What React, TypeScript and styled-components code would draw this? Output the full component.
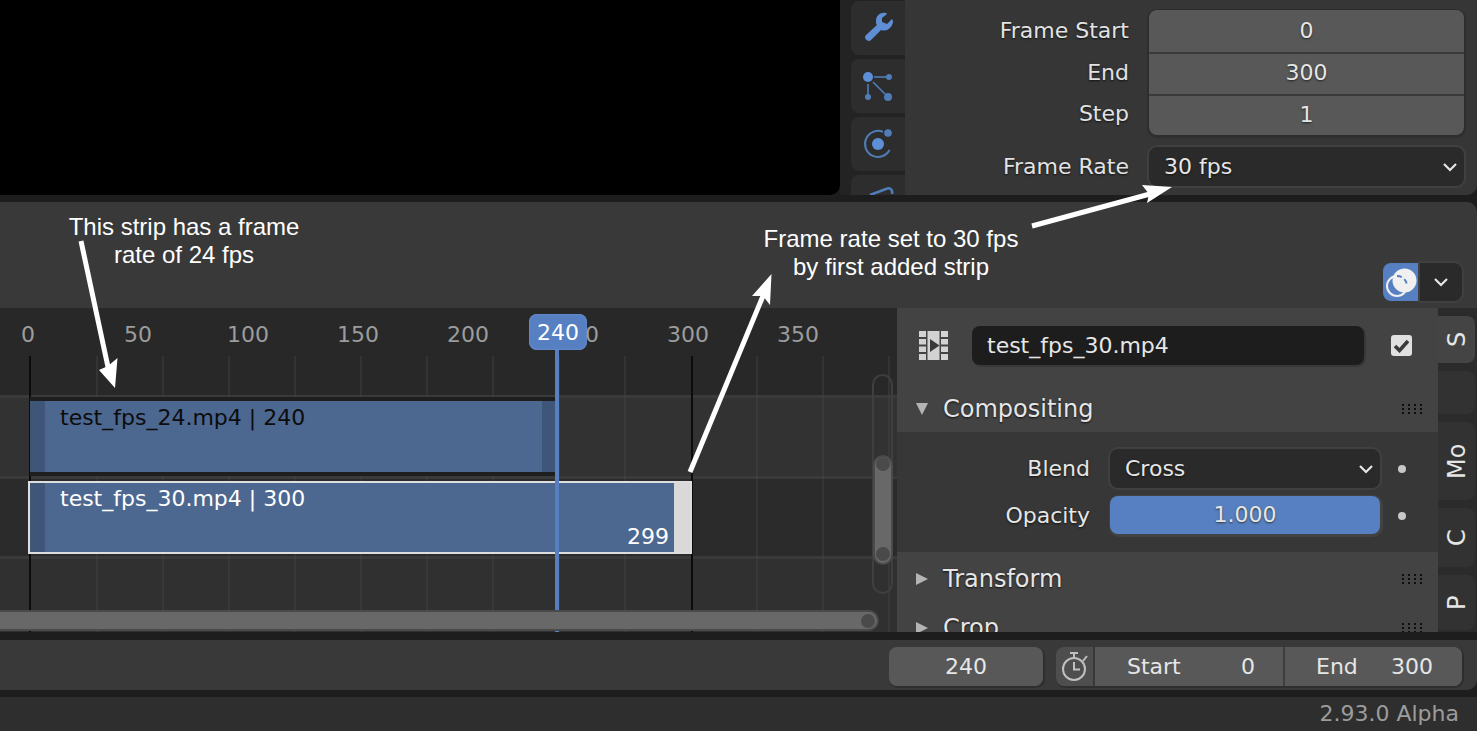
import React from 'react';
import styled, { createGlobalStyle } from 'styled-components';

const GlobalStyle = createGlobalStyle`
  html, body {
    margin: 0;
    padding: 0;
    background: #1d1d1d;
  }
  * { box-sizing: border-box; }
`;

const colors = {
  text: '#e6e6e6',
  blue: '#5680c2',
  field: '#585858',
  dark: '#2a2a2a',
  strip: '#4d6890',
  stripEnd: '#3f5678',
};

const Page = styled.div`
  position: relative;
  width: 1477px;
  height: 731px;
  overflow: hidden;
  display: flex;
  flex-direction: column;
  background: #1d1d1d;
  font-family: 'DejaVu Sans', sans-serif;
  font-size: 22px;
  color: ${colors.text};
`;

/* top area */
const TopRow = styled.div`
  height: 195px;
  display: flex;
  flex-shrink: 0;
`;
const Viewport = styled.div`
  width: 840px;
  background: #000;
  border-bottom-right-radius: 10px;
`;
const ToolTabs = styled.div`
  width: 65px;
  padding-left: 11px;
  background: #232323;
  display: flex;
  flex-direction: column;
  gap: 4px;
  overflow: hidden;
`;
const ToolTab = styled.div<{ $first?: boolean }>`
  width: 54px;
  height: 54px;
  flex-shrink: 0;
  margin-top: ${p => (p.$first ? '1px' : '0')};
  background: #2d2d2d;
  border-radius: 8px 0 0 8px;
  display: flex;
  align-items: center;
  justify-content: center;
`;
const OutputPanel = styled.div`
  flex: 1;
  background: #363636;
  border-bottom-right-radius: 10px;
  padding: 10px 13px 0 0;
  display: grid;
  grid-template-columns: 224px 1fr;
  grid-auto-rows: min-content;
  column-gap: 20px;
`;
const Label = styled.div`
  text-align: right;
  text-shadow: 0 1px 2px #111;
  color: #e2e2e2;
  line-height: 42px;
  height: 41px;
`;
const NumGroup = styled.div`
  grid-column: 2;
  grid-row: 1 / span 3;
  height: 125px;
  border-radius: 8px;
  background: ${colors.field};
  box-shadow: 0 1px 0 2px #2e2e2e;
  display: flex;
  flex-direction: column;
`;
const NumCell = styled.div<{ $first?: boolean }>`
  flex: 1;
  text-align: center;
  line-height: ${p => (p.$first ? 42 : 38)}px;
  text-shadow: 0 1px 2px #222;
  border-top: ${p => (p.$first ? 'none' : '2px solid #3a3a3a')};
`;
const Select = styled.div`
  height: 39px;
  border-radius: 8px;
  background: ${colors.dark};
  box-shadow: 0 0 0 2px #404040;
  display: flex;
  align-items: center;
  justify-content: space-between;
  padding: 0 6px 0 15px;
  text-shadow: 0 1px 2px #111;
`;
const RateLabel = styled(Label)`
  margin-top: 11px;
`;
const RateSelect = styled(Select)`
  margin-top: 12px;
`;

/* sequencer editor */
const Editor = styled.div`
  height: 430px;
  margin-top: 7px;
  flex-shrink: 0;
  display: flex;
  flex-direction: column;
  background: #393939;
  border-radius: 0 10px 0 0;
  overflow: hidden;
`;
const EditorHeader = styled.div`
  height: 106px;
  flex-shrink: 0;
  display: flex;
  justify-content: flex-end;
  align-items: flex-end;
  padding: 0 15px 7px 0;
`;
const OverlayToggle = styled.div`
  width: 37px;
  height: 38px;
  background: ${colors.blue};
  border-radius: 8px 0 0 8px;
  display: flex;
  align-items: center;
  justify-content: center;
`;
const OverlayMenu = styled.div`
  width: 42px;
  height: 38px;
  background: ${colors.dark};
  border-radius: 0 8px 8px 0;
  box-shadow: 0 0 0 2px #404040;
  display: flex;
  align-items: center;
  justify-content: center;
`;
const EditorBody = styled.div`
  flex: 1;
  display: flex;
  min-height: 0;
`;
const Canvas = styled.div`
  position: relative;
  width: 897px;
  height: 324px;
  overflow: hidden;
  background: #282828;
`;
const Channels = styled.div`
  margin-top: 87px;
  display: flex;
  flex-direction: column;
`;
const Channel = styled.div<{ $h: number; $bg: string }>`
  height: ${p => p.$h}px;
  background: ${p => p.$bg};
  border-top: 3px solid #3a3a3a;
`;
const GridLine = styled.div<{ $x: number }>`
  position: absolute;
  top: 48px;
  bottom: 0;
  left: ${p => p.$x}px;
  width: 2px;
  background: rgba(70, 70, 70, 0.4);
`;
const Bound = styled.div<{ $x: number }>`
  position: absolute;
  top: 48px;
  bottom: 0;
  left: ${p => p.$x}px;
  width: 2px;
  background: #0c0c0c;
`;
const Tick = styled.div<{ $x: number }>`
  position: absolute;
  top: 14px;
  left: ${p => p.$x}px;
  transform: translateX(-50%);
  color: #9c9c9c;
  line-height: 26px;
`;
const Strip = styled.div<{ $top: number; $left: number; $w: number; $h: number }>`
  position: absolute;
  left: ${p => p.$left}px;
  top: ${p => p.$top}px;
  width: ${p => p.$w}px;
  height: ${p => p.$h}px;
  background: ${colors.strip};
`;
const PlainStrip = styled(Strip)`
  box-shadow: 0 -4px 0 #1e1e1e, 0 4px 0 #1e1e1e;
  color: #0c0c0c;
`;
const ActiveStrip = styled(Strip)`
  border: 2px solid #dedede;
  color: #fff;
`;
const Handle = styled.div<{ $side: 'left' | 'right'; $w: number; $color: string }>`
  position: absolute;
  top: 0;
  bottom: 0;
  ${p => p.$side}: 0;
  width: ${p => p.$w}px;
  background: ${p => p.$color};
`;
const StripName = styled.div<{ $active?: boolean }>`
  position: absolute;
  left: 30px;
  top: ${p => (p.$active ? 3 : 4)}px;
  line-height: 26px;
  white-space: nowrap;
`;
const EndFrame = styled.div`
  position: absolute;
  right: 21px;
  bottom: 2px;
  line-height: 26px;
`;
const Playhead = styled.div`
  position: absolute;
  left: 555px;
  top: 42px;
  bottom: 0;
  width: 4px;
  background: ${colors.blue};
`;
const FrameBadge = styled.div`
  position: absolute;
  left: 529px;
  top: 6px;
  width: 58px;
  height: 36px;
  border-radius: 8px;
  background: ${colors.blue};
  box-shadow: inset 0 0 0 1px #6088c8;
  color: #fff;
  text-align: center;
  line-height: 38px;
`;
const VScroll = styled.div`
  position: absolute;
  left: 872px;
  top: 66px;
  width: 21px;
  height: 220px;
  border: 2px solid #3f3f3f;
  border-radius: 11px;
`;
const VThumb = styled.div`
  position: absolute;
  left: 1px;
  top: 81px;
  width: 16px;
  height: 106px;
  border-radius: 8px;
  background: #686868;
  box-shadow: 0 0 0 2px #4a4a4a;
  display: flex;
  flex-direction: column;
  justify-content: space-between;
  align-items: center;
  padding-bottom: 2px;
`;
const Knob = styled.div`
  width: 14px;
  height: 14px;
  border-radius: 50%;
  background: #4a4a4a;
`;
const HScroll = styled.div`
  position: absolute;
  left: -10px;
  top: 304px;
  width: 887px;
  height: 17px;
  border-radius: 9px;
  background: #686868;
  box-shadow: 0 0 0 2px #4a4a4a;
  display: flex;
  justify-content: flex-end;
  align-items: center;
  padding-right: 2px;
`;

/* sidebar */
const Sidebar = styled.div`
  flex: 1;
  display: flex;
  height: 324px;
`;
const SidePanel = styled.div`
  width: 541px;
  height: 324px;
  overflow: hidden;
  background: #434343;
  display: flex;
  flex-direction: column;
`;
const NameRow = styled.div`
  height: 77px;
  flex-shrink: 0;
  padding: 18px 25px 0 22px;
  display: flex;
  align-items: flex-start;
`;
const FilmWrap = styled.div`
  width: 29px;
  height: 29px;
  margin-top: 5px;
`;
const NameField = styled.div`
  width: 392px;
  height: 39px;
  margin-left: 24px;
  border-radius: 8px;
  background: #1d1d1d;
  box-shadow: 1px 1px 0 1px #383838;
  padding-left: 15px;
  line-height: 39px;
`;
const Checkbox = styled.div`
  width: 21px;
  height: 21px;
  margin: 9px 0 0 27px;
  border-radius: 3px;
  background: #e0e0e0;
  display: flex;
  align-items: center;
  justify-content: center;
`;
const PanelHead = styled.div<{ $h: number }>`
  height: ${p => p.$h}px;
  flex-shrink: 0;
  display: flex;
  align-items: center;
  padding: 0 14px 0 19px;
  gap: 15px;
  font-size: 24px;
  text-shadow: 0 1px 2px #111;
`;
const Arrow = styled.div<{ $open?: boolean }>`
  width: 0;
  height: 0;
  ${p =>
    p.$open
      ? `border-left: 6px solid transparent;
         border-right: 6px solid transparent;
         border-top: 12px solid #b4b4b4;`
      : `border-top: 6px solid transparent;
         border-bottom: 6px solid transparent;
         border-left: 12px solid #b4b4b4;`}
`;
const Grip = styled.div`
  margin-left: auto;
  width: 24px;
  height: 12px;
  background-image: radial-gradient(circle, #0e0e0e 1px, transparent 1.4px);
  background-size: 6px 4px;
`;
const PanelBody = styled.div`
  height: 120px;
  flex-shrink: 0;
  background: #373737;
  padding-top: 17px;
  display: grid;
  grid-template-columns: 193px 270px 1fr;
  grid-auto-rows: 47px;
  column-gap: 20px;
  align-items: start;
`;
const BodyLabel = styled.div`
  text-align: right;
  line-height: 40px;
  text-shadow: 0 1px 2px #111;
`;
const Slider = styled.div`
  height: 38px;
  border-radius: 8px;
  background: ${colors.blue};
  box-shadow: 1px 1px 0 2px #424242;
  text-align: center;
  line-height: 38px;
  text-shadow: 0 1px 2px #333;
`;
const Dot = styled.div`
  width: 8px;
  height: 8px;
  margin: 16px 0 0 -2px;
  border-radius: 50%;
  background: #c8c8c8;
`;
const SideTabs = styled.div`
  flex: 1;
  height: 324px;
  overflow: hidden;
  background: #2b2b2b;
  display: flex;
  flex-direction: column;
  gap: 8px;
  padding: 8px 2px 0 0;
`;
const SideTab = styled.div<{ $h: number; $active?: boolean }>`
  height: ${p => p.$h}px;
  flex-shrink: 0;
  background: ${p => (p.$active ? '#444444' : '#323232')};
  writing-mode: vertical-rl;
  transform: rotate(180deg);
  border-radius: 8px 0 0 8px;
  font-size: 24px;
  display: flex;
  align-items: center;
  justify-content: center;
`;

/* timeline bar */
const TimelineBar = styled.div`
  height: 50px;
  margin-top: 8px;
  flex-shrink: 0;
  background: #393939;
  border-radius: 0 0 10px 0;
  display: flex;
  align-items: flex-start;
  justify-content: flex-end;
  padding: 7px 15px 0 0;
`;
const FrameField = styled.div`
  width: 154px;
  height: 39px;
  border-radius: 8px;
  background: ${colors.field};
  box-shadow: 1px 1px 0 1px #2e2e2e;
  text-align: center;
  line-height: 39px;
  margin-right: 13px;
`;
const RangeGroup = styled.div`
  display: flex;
  height: 39px;
  box-shadow: 1px 1px 0 1px #2e2e2e;
  border-radius: 8px;
  overflow: hidden;
`;
const ClockButton = styled.div`
  width: 39px;
  background: #4e4e4e;
  display: flex;
  align-items: center;
  justify-content: center;
  border-right: 2px solid #383838;
`;
const RangeCell = styled.div<{ $w: number; $pl: number; $pr: number; $split?: boolean }>`
  width: ${p => p.$w}px;
  background: ${colors.field};
  display: flex;
  justify-content: space-between;
  padding: 0 ${p => p.$pr}px 0 ${p => p.$pl}px;
  line-height: 39px;
  border-left: ${p => (p.$split ? '2px solid #3e3e3e' : 'none')};
`;
const StatusBar = styled.div`
  height: 34px;
  margin-top: 7px;
  flex-shrink: 0;
  background: #2e2e2e;
  text-align: right;
  padding-right: 18px;
  line-height: 34px;
  color: #9c9c9c;
`;

/* annotations on top of the screenshot */
const Note = styled.div<{ $x: number; $y: number; $w: number }>`
  position: absolute;
  left: ${p => p.$x}px;
  top: ${p => p.$y}px;
  width: ${p => p.$w}px;
  font-family: 'Liberation Sans', Arial, sans-serif;
  font-size: 24px;
  line-height: 28px;
  color: #fff;
  text-align: center;
`;
const ArrowLayer = styled.svg`
  position: absolute;
  left: 0;
  top: 0;
  pointer-events: none;
`;

const Chevron = () => (
  <svg width="16" height="10" viewBox="0 0 16 10">
    <path d="M2 2l6 6 6-6" fill="none" stroke="#e6e6e6" strokeWidth="2.2" />
  </svg>
);

const Wrench = () => (
  <svg width="32" height="32" viewBox="0 0 32 32">
    <path
      d="M24 1C19 0 14 3 14 9c0 2 0 3 1 4L4 23c-3 3 2 8 5 5l10-10c6 2 11-2 12-8 0-2-1-3-1-3l-5 5-5-2v-4l5-4z"
      fill="#5e8fd6"
    />
  </svg>
);

const Nodes = () => (
  <svg width="32" height="32" viewBox="0 0 32 32" fill="#4f7db8" stroke="#4f7db8">
    <line x1="12" y1="7" x2="24" y2="7" strokeWidth="1.600" />
    <line x1="6" y1="14" x2="6" y2="25" strokeWidth="1.600" />
    <line x1="11" y1="12" x2="23" y2="24" strokeWidth="1.600" />
    <circle cx="6" cy="7" r="5" fill="#5e8fd6" stroke="none" />
    <circle cx="27" cy="7" r="3" stroke="none" />
    <circle cx="6" cy="27" r="3" stroke="none" />
    <circle cx="26" cy="27" r="4" stroke="none" />
  </svg>
);

const Orbit = () => (
  <svg width="32" height="32" viewBox="0 0 32 32">
    <path d="M21 3.900A13 13 0 1 0 27.500 22" fill="none" stroke="#4f7db8" strokeWidth="2" />
    <circle cx="16" cy="16" r="6" fill="#5e8fd6" />
    <circle cx="26" cy="5" r="3.800" fill="#4f7db8" />
  </svg>
);

const Partial = () => (
  <svg width="32" height="32" viewBox="0 0 32 32">
    <path d="M8 9L24 3c4-2 7 1 6 5" fill="none" stroke="#4f7db8" strokeWidth="2.500" />
  </svg>
);

const Film = () => (
  <svg width="29" height="29" viewBox="0 0 29 29">
    <g fill="#d2d2d2">
      <rect x="0" y="0" width="7" height="6" />
      <rect x="0" y="8" width="7" height="5.500" />
      <rect x="0" y="15.500" width="7" height="5.500" />
      <rect x="0" y="23" width="7" height="6" />
      <rect x="22" y="0" width="7" height="6" />
      <rect x="22" y="8" width="7" height="5.500" />
      <rect x="22" y="15.500" width="7" height="5.500" />
      <rect x="22" y="23" width="7" height="6" />
      <rect x="8.500" y="0" width="12" height="29" />
    </g>
    <path d="M11 8l9.500 6.500L11 21z" fill="#3a3a3a" />
  </svg>
);

const Check = () => (
  <svg width="17" height="15" viewBox="0 0 17 15">
    <path d="M2 8l4.500 4.500L15 3" fill="none" stroke="#3a3a3a" strokeWidth="3.600" />
  </svg>
);

const Overlap = () => (
  <svg width="32" height="32" viewBox="0 0 32 32">
    <circle cx="18.500" cy="14.500" r="12" fill="#f0f0f0" />
    <circle cx="11" cy="20" r="10" fill="none" stroke="#f0f0f0" strokeWidth="2" />
    <path d="M11 10A10 10 0 0 1 21 20" fill="none" stroke={colors.blue} strokeWidth="2" strokeDasharray="5 3" />
  </svg>
);

const Stopwatch = () => (
  <svg width="26" height="32" viewBox="0 0 26 32" fill="none" stroke="#c0c0c0" strokeWidth="2">
    <circle cx="12" cy="18" r="11" />
    <path d="M12 11v7.500h6" />
    <path d="M8 2h8M12 2v5" />
    <path d="M21 10l4-5" />
  </svg>
);

const gridXs = [96, 162, 228, 294, 360, 426, 492, 558, 624, 756, 822, 888];
const ticks = [
  { x: 28, t: '0' },
  { x: 138, t: '50' },
  { x: 248, t: '100' },
  { x: 358, t: '150' },
  { x: 468, t: '200' },
  { x: 578, t: '250' },
  { x: 688, t: '300' },
  { x: 798, t: '350' },
];

export default function App() {
  return (
    <Page>
      <GlobalStyle />
      <TopRow>
        <Viewport />
        <ToolTabs>
          <ToolTab $first><Wrench /></ToolTab>
          <ToolTab><Nodes /></ToolTab>
          <ToolTab><Orbit /></ToolTab>
          <ToolTab><Partial /></ToolTab>
        </ToolTabs>
        <OutputPanel>
          <Label>Frame Start</Label>
          <NumGroup>
            <NumCell $first>0</NumCell>
            <NumCell>300</NumCell>
            <NumCell>1</NumCell>
          </NumGroup>
          <Label>End</Label>
          <Label>Step</Label>
          <RateLabel>Frame Rate</RateLabel>
          <RateSelect>
            <span>30 fps</span>
            <Chevron />
          </RateSelect>
        </OutputPanel>
      </TopRow>

      <Editor>
        <EditorHeader>
          <OverlayToggle><Overlap /></OverlayToggle>
          <OverlayMenu><Chevron /></OverlayMenu>
        </EditorHeader>
        <EditorBody>
          <Canvas>
            <Channels>
              <Channel $h={81} $bg="#323232" />
              <Channel $h={80} $bg="#2b2b2b" />
              <Channel $h={76} $bg="#303030" />
            </Channels>
            {gridXs.map(x => <GridLine key={x} $x={x} />)}
            <Bound $x={29} />
            <Bound $x={691} />
            {ticks.map(k => <Tick key={k.t} $x={k.x}>{k.t}</Tick>)}
            <PlainStrip $left={30} $top={93} $w={525} $h={71}>
              <Handle $side="left" $w={15} $color={colors.stripEnd} />
              <Handle $side="right" $w={13} $color={colors.stripEnd} />
              <StripName>test_fps_24.mp4 | 240</StripName>
            </PlainStrip>
            <ActiveStrip $left={28} $top={173} $w={664} $h={73}>
              <Handle $side="left" $w={15} $color={colors.stripEnd} />
              <Handle $side="right" $w={16} $color="#d9d9d9" />
              <StripName $active>test_fps_30.mp4 | 300</StripName>
              <EndFrame>299</EndFrame>
            </ActiveStrip>
            <Playhead />
            <FrameBadge>240</FrameBadge>
            <VScroll>
              <VThumb><Knob /><Knob /></VThumb>
            </VScroll>
            <HScroll><Knob /></HScroll>
          </Canvas>
          <Sidebar>
            <SidePanel>
              <NameRow>
                <FilmWrap><Film /></FilmWrap>
                <NameField>test_fps_30.mp4</NameField>
                <Checkbox><Check /></Checkbox>
              </NameRow>
              <PanelHead $h={47}>
                <Arrow $open />
                <span>Compositing</span>
                <Grip />
              </PanelHead>
              <PanelBody>
                <BodyLabel>Blend</BodyLabel>
                <Select>
                  <span>Cross</span>
                  <Chevron />
                </Select>
                <Dot />
                <BodyLabel>Opacity</BodyLabel>
                <Slider>1.000</Slider>
                <Dot />
              </PanelBody>
              <PanelHead $h={53}>
                <Arrow />
                <span>Transform</span>
                <Grip />
              </PanelHead>
              <PanelHead $h={46}>
                <Arrow />
                <span>Crop</span>
                <Grip />
              </PanelHead>
            </SidePanel>
            <SideTabs>
              <SideTab $h={47} $active>S</SideTab>
              <SideTab $h={43} />
              <SideTab $h={78}>Mo</SideTab>
              <SideTab $h={59}>C</SideTab>
              <SideTab $h={55}>P</SideTab>
            </SideTabs>
          </Sidebar>
        </EditorBody>
      </Editor>

      <TimelineBar>
        <FrameField>240</FrameField>
        <RangeGroup>
          <ClockButton><Stopwatch /></ClockButton>
          <RangeCell $w={188} $pl={32} $pr={28}><span>Start</span><span>0</span></RangeCell>
          <RangeCell $w={179} $pl={31} $pr={29} $split><span>End</span><span>300</span></RangeCell>
        </RangeGroup>
      </TimelineBar>
      <StatusBar>2.93.0 Alpha</StatusBar>

      <Note $x={44} $y={213} $w={280}>This strip has a frame<br />rate of 24 fps</Note>
      <Note $x={741} $y={225} $w={300}>Frame rate set to 30 fps<br />by first added strip</Note>
      <ArrowLayer width="1477" height="731" viewBox="0 0 1477 731">
        <g stroke="#fff" strokeWidth="5" fill="#fff">
          <line x1="81" y1="241" x2="108" y2="367" />
          <polygon points="115,388 99,370 108,366 117.500,358" stroke="none" />
          <line x1="1032" y1="226" x2="1150" y2="194" />
          <polygon points="1172,187 1142,185 1149,194 1147,203" stroke="none" />
          <line x1="690" y1="472" x2="763" y2="296" />
          <polygon points="771.500,274 752,296 763,296 770,305" stroke="none" />
        </g>
      </ArrowLayer>
    </Page>
  );
}
